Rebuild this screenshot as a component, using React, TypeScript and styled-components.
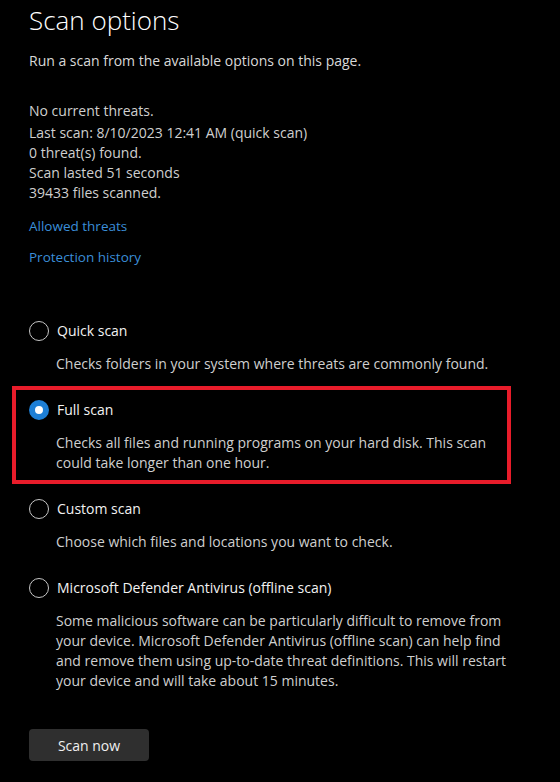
import styled, { createGlobalStyle } from "styled-components";

const GlobalStyle = createGlobalStyle`
    html, body {
        margin: 0;
        padding: 0;
        background: #000;
    }
    body {
        font-family: "Open Sans", "Noto Sans", sans-serif;
        color: #d4d4d4;
    }
`;

type ScanOption = {
    id: string;
    label: string;
    description: string;
};

const options: ScanOption[] = [
    {
        id: "quick",
        label: "Quick scan",
        description: "Checks folders in your system where threats are commonly found.",
    },
    {
        id: "full",
        label: "Full scan",
        description: "Checks all files and running programs on your hard disk. This scan could take longer than one hour.",
    },
    {
        id: "custom",
        label: "Custom scan",
        description: "Choose which files and locations you want to check.",
    },
    {
        id: "offline",
        label: "Microsoft Defender Antivirus (offline scan)",
        description: "Some malicious software can be particularly difficult to remove from your device. Microsoft Defender Antivirus (offline scan) can help find and remove them using up-to-date threat definitions. This will restart your device and will take about 15 minutes.",
    },
];

const stats = [
    "Last scan: 8/10/2023 12:41 AM (quick scan)",
    "0 threat(s) found.",
    "Scan lasted 51 seconds",
    "39433 files scanned.",
];

const App = () => {
    const selected = "full";
    return (
        <Page>
            <GlobalStyle />
            <Title>Scan options</Title>
            <Subtitle>Run a scan from the available options on this page.</Subtitle>

            <Status>
                <p className="lead">No current threats.</p>
                {stats.map((s) => (
                    <p key={s}>{s}</p>
                ))}
            </Status>

            <Links>
                <a href="#">Allowed threats</a>
                <a href="#">Protection history</a>
            </Links>

            <Options>
                {options.map((o) => (
                    <Option key={o.id} $highlight={o.id === selected}>
                        <Label>
                            <Radio $checked={o.id === selected} />
                            <span>{o.label}</span>
                        </Label>
                        <Description>{o.description}</Description>
                    </Option>
                ))}
            </Options>

            <ScanButton>Scan now</ScanButton>
        </Page>
    );
};

const Page = styled.div`
    width: 560px;
    height: 782px;
    box-sizing: border-box;
    padding: 0 0 0 29px;
    background: #000;
    font-size: 14px;
    line-height: 20px;
    overflow: hidden;
`;

const Title = styled.h1`
    margin: 0;
    font-size: 26px;
    line-height: 40px;
    font-weight: 300;
    color: #fff;
`;

const Subtitle = styled.p`
    margin: 11px 0 0;
    color: #d8d8d8;
`;

const Status = styled.div`
    margin-top: 30px;
    >p {
        margin: 0;
        color: #cfcfcf;
    }
    >.lead {
        margin-bottom: 2px;
    }
`;

const Links = styled.div`
    display: flex;
    flex-direction: column;
    align-items: flex-start;
    gap: 11px;
    margin-top: 13px;
    >a {
        color: #3b8ed8;
        text-decoration: none;
        font-size: 13.5px;
    }
`;

const Options = styled.div`
    display: flex;
    flex-direction: column;
    gap: 26px;
    margin-top: 54px;
    width: 482px;
`;

const Option = styled.div<{ $highlight: boolean }>`
    position: relative;
    display: flex;
    flex-direction: column;
    gap: 13px;
    &::after {
        content: "";
        display: ${(p) => (p.$highlight ? "block" : "none")};
        position: absolute;
        left: -17px;
        top: -14px;
        width: 499px;
        height: 98px;
        box-sizing: border-box;
        border: 4.5px solid #e81c2a;
        pointer-events: none;
    }
`;

const Label = styled.label`
    display: flex;
    align-items: center;
    gap: 8px;
    color: #f2f2f2;
    height: 20px;
`;

const Radio = styled.span<{ $checked: boolean }>`
    width: 20px;
    height: 20px;
    box-sizing: border-box;
    border-radius: 50%;
    flex-shrink: 0;
    border: ${(p) => (p.$checked ? "6px solid #1d7fd6" : "1px solid #c6c6c6")};
    background: ${(p) => (p.$checked ? "#fff" : "transparent")};
`;

const Description = styled.p`
    margin: 0 0 0 27px;
    width: 455px;
    color: #cfcfcf;
`;

const ScanButton = styled.button`
    margin-top: 38px;
    width: 120px;
    height: 32px;
    border: none;
    border-radius: 4px;
    background: #2f2f2f;
    color: #f0f0f0;
    font-family: inherit;
    font-size: 14px;
    padding: 0;
`;

export default App;
